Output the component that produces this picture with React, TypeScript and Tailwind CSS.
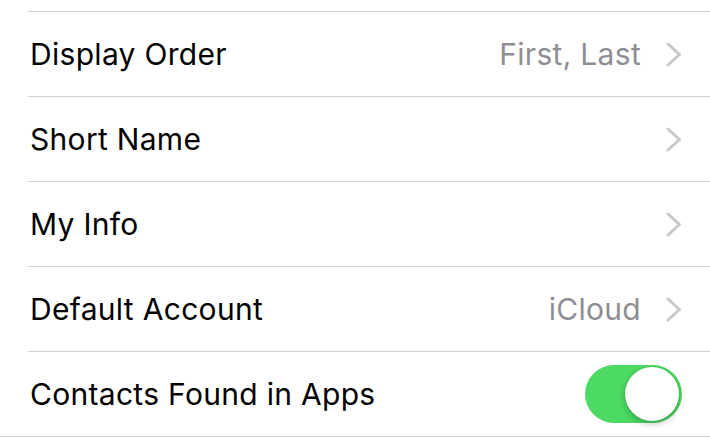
const rows = [
  { label: "Display Order", value: "First, Last", chevron: true },
  { label: "Short Name", value: "", chevron: true },
  { label: "My Info", value: "", chevron: true },
  { label: "Default Account", value: "iCloud", chevron: true },
];

const Chevron = () => (
  <svg width="16" height="25" viewBox="0 0 16 25" className="ml-[25px] shrink-0">
    <path d="M2 2 L13.5 12.5 L2 23" fill="none" stroke="#c7c7cc" strokeWidth="3" strokeLinecap="round" strokeLinejoin="round" />
  </svg>
);

const Toggle = () => (
  <div className="relative w-[97px] h-[58px] rounded-full bg-[#4cd964]">
    <div className="absolute right-[3px] top-[2px] w-[54px] h-[54px] rounded-full bg-white shadow-[0_3px_6px_rgba(0,0,0,0.25),0_0_1px_rgba(0,0,0,0.2)]" />
  </div>
);

export default function App() {
  return (
    <div
      className="w-[710px] h-[439px] bg-white overflow-hidden pt-[11px]"
      style={{ fontFamily: "Inter, 'Noto Sans', sans-serif" }}
    >
      <div className="pl-[28px]">
        {rows.map((r) => (
          <div
            key={r.label}
            className="h-[85px] border-t border-[#d4d4d8] flex items-center pl-[2px] pr-[28px] text-[30px] tracking-[0.3px]"
          >
            <span className="text-black flex-1">{r.label}</span>
            {r.value && <span className="text-[#8e8e93]">{r.value}</span>}
            {r.chevron && <Chevron />}
          </div>
        ))}
        <div className="h-[85px] border-t border-[#d4d4d8] flex items-center pl-[2px] pr-[28px] text-[30px] tracking-[0.3px]">
          <span className="text-black flex-1">Contacts Found in Apps</span>
          <Toggle />
        </div>
      </div>
      <div className="border-t border-[#d4d4d8]" />
    </div>
  );
}
